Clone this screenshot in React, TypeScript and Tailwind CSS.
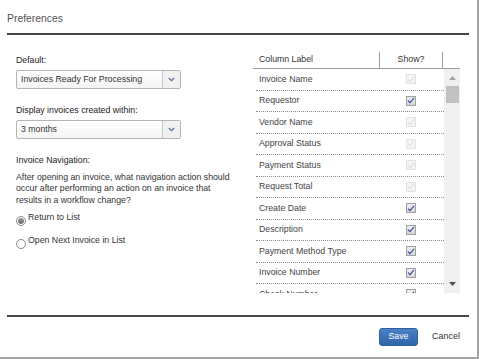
const rows = [
  { label: "Invoice Name", checked: true, disabled: true },
  { label: "Requestor", checked: true, disabled: false },
  { label: "Vendor Name", checked: true, disabled: true },
  { label: "Approval Status", checked: true, disabled: true },
  { label: "Payment Status", checked: true, disabled: true },
  { label: "Request Total", checked: true, disabled: true },
  { label: "Create Date", checked: true, disabled: false },
  { label: "Description", checked: true, disabled: false },
  { label: "Payment Method Type", checked: true, disabled: false },
  { label: "Invoice Number", checked: true, disabled: false },
  { label: "Check Number", checked: true, disabled: false },
];

function Select({ value }: { value: string }) {
  return (
    <div className="flex h-[19px] w-[165px] rounded-[2px] border border-[#b5b5b5] bg-gradient-to-b from-white to-[#f3f3f3]">
      <div className="flex flex-1 items-center pl-[4px] text-[8.75px] leading-none text-[#333]">
        {value}
      </div>
      <div className="flex w-[18px] items-center justify-center border-l border-[#c8c8c8] bg-[#f1f1f1]">
        <svg width="7" height="5" viewBox="0 0 7 5">
          <polyline
            points="0.8,1 3.5,3.6 6.2,1"
            fill="none"
            stroke="#5a7193"
            strokeWidth="1.3"
          />
        </svg>
      </div>
    </div>
  );
}

function Radio({ checked, label }: { checked: boolean; label: string }) {
  return (
    <div className="flex items-start">
      <span className="mt-[4px] flex h-[10px] w-[10px] items-center justify-center rounded-full border border-[#8a8a8a] bg-white">
        {checked && (
          <span className="h-[6px] w-[6px] rounded-full bg-gradient-to-b from-[#9a9a9a] to-[#6a6a6a]" />
        )}
      </span>
      <span className="ml-[2px] text-[8.75px] leading-[11px] text-[#333]">
        {label}
      </span>
    </div>
  );
}

function Check({ disabled }: { disabled: boolean }) {
  return (
    <span
      className={`flex h-[10px] w-[10px] items-center justify-center border ${
        disabled
          ? "border-[#e2e2e2] bg-[#f5f5f5]"
          : "border-[#a0a0a0] bg-gradient-to-b from-[#eeeeee] to-[#d6d6d6]"
      }`}
    >
      <svg width="8" height="7" viewBox="0 0 8 7">
        <polyline
          points="1,3.6 3,5.6 7,0.8"
          fill="none"
          stroke={disabled ? "#e0e0e0" : "#3b4fa3"}
          strokeWidth="1.2"
        />
      </svg>
    </span>
  );
}

export default function App() {
  return (
    <div className="flex h-[359px] w-[479px] flex-col border-r-2 border-b-2 border-[#a3a3a3] bg-white font-['Liberation_Sans',Arial,sans-serif]">
      <div className="px-[7px] pt-[13px] pb-[8px] text-[10.4px] leading-[12px] text-[#555]">
        Preferences
      </div>
      <div className="mx-[8px] ml-[7px] h-[2px] bg-[#45484c]" />

      <div className="flex h-[258px]">
        {/* left side */}
        <div className="w-[253px] pl-[16px] pt-[20px]">
          <div className="mb-[4px] text-[8.75px] leading-[11px] text-[#222]">Default:</div>
          <Select value="Invoices Ready For Processing" />

          <div className="mt-[16px] mb-[4px] text-[8.75px] leading-[11px] text-[#222]">
            Display invoices created within:
          </div>
          <Select value="3 months" />

          <div className="mt-[16px] text-[8.75px] leading-[11px] text-[#222]">
            Invoice Navigation:
          </div>
          <p className="mt-[5.5px] w-[222px] text-[8.75px] leading-[11.5px] text-[#333]">
            After opening an invoice, what navigation action should occur after
            performing an action on an invoice that results in a workflow change?
          </p>
          <div className="mt-[5.5px] flex flex-col gap-[9px]">
            <Radio checked label="Return to List" />
            <Radio checked={false} label="Open Next Invoice in List" />
          </div>
        </div>

        {/* column table */}
        <div className="w-[207px] pt-[17px]">
          <div className="flex h-[17px] border-b border-[#9c9c9c] text-[8.75px] text-[#333]">
            <div className="flex w-[126px] items-center pl-[6px]">Column Label</div>
            <div className="flex w-[63px] items-center justify-center border-l border-[#9c9c9c]">
              Show?
            </div>
            <div className="flex-1 border-l border-[#9c9c9c]" />
          </div>
          <div className="flex h-[224px]">
            <div className="w-[191px] overflow-hidden pl-[3px]">
              {rows.map((r) => (
                <div
                  key={r.label}
                  className="flex h-[21.5px] border-b border-dotted border-[#8a8a8a]"
                >
                  <div className="flex w-[123px] items-center pl-[3px] text-[8.75px] text-[#444]">
                    {r.label}
                  </div>
                  <div className="flex w-[63px] items-center justify-center">
                    <Check disabled={r.disabled} />
                  </div>
                </div>
              ))}
            </div>
            <div className="flex w-[16px] flex-col items-center bg-[#f0f0f0]">
              <svg className="mt-[7px]" width="7" height="4" viewBox="0 0 7 4">
                <polygon points="0,4 3.5,0 7,4" fill="#a3a3a3" />
              </svg>
              <div className="mt-[6px] h-[17px] w-[13px] bg-[#c1c1c1]" />
              <div className="flex-1" />
              <svg className="mb-[7px]" width="7" height="4" viewBox="0 0 7 4">
                <polygon points="0,0 7,0 3.5,4" fill="#505050" />
              </svg>
            </div>
          </div>
        </div>
      </div>

      <div className="mt-[22px] ml-[7px] mr-[8px] h-[2px] bg-[#45484c]" />

      <div className="mt-[11px] flex items-center justify-end pr-[9px]">
        <button className="h-[18px] w-[39px] rounded-[3px] border border-[#2f609f] bg-gradient-to-b from-[#4a82c6] to-[#2f64a9] text-[8.75px] text-white">
          Save
        </button>
        <button className="ml-[6px] h-[18px] px-[8px] text-[9px] text-[#333]">
          Cancel
        </button>
      </div>
    </div>
  );
}
